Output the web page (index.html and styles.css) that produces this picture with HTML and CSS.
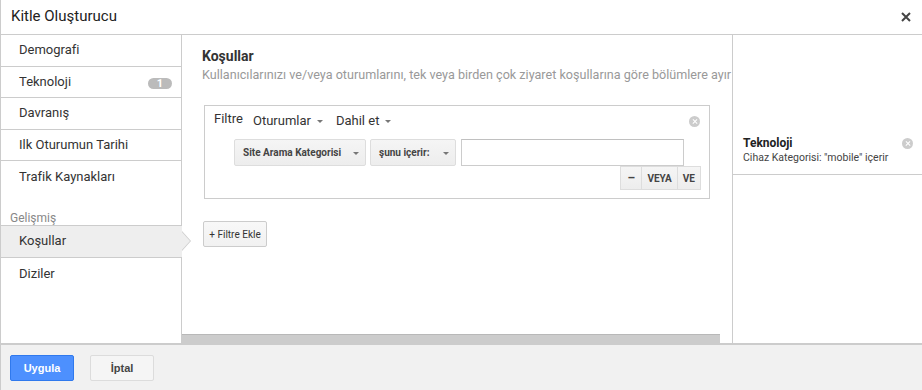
FILE: index.html
```html
<!DOCTYPE html>
<html lang="tr">
<head>
    <meta charset="UTF-8">
    <meta name="viewport" content="width=device-width, initial-scale=1.0">
    <title>Kitle Oluşturucu</title>
    <link rel="stylesheet" href="styles.css">
</head>
<body>
    <div class="dialog">
        <header class="dialog-head">
            <span class="dialog-title">Kitle Oluşturucu</span>
            <svg class="close" width="10" height="10" viewBox="0 0 10 10">
                <path d="M1 1L9 9M9 1L1 9" stroke="#444" stroke-width="2"/>
            </svg>
        </header>

        <div class="dialog-body">
            <nav class="side">
                <div class="side-item">Demografi</div>
                <div class="side-item">Teknoloji <span class="badge">1</span></div>
                <div class="side-item">Davranış</div>
                <div class="side-item">Ilk Oturumun Tarihi</div>
                <div class="side-item no-line">Trafik Kaynakları</div>
                <div class="side-group">Gelişmiş</div>
                <div class="side-item active">Koşullar</div>
                <div class="side-item no-line">Diziler</div>
            </nav>

            <main class="main">
                <div class="main-scroll">
                    <h2 class="main-title">Koşullar</h2>
                    <p class="main-sub">Kullanıcılarınızı ve/veya oturumlarını, tek veya birden çok ziyaret koşullarına göre bölümlere ayır</p>

                    <div class="filter">
                        <div class="filter-head">
                            <span class="filter-label">Filtre</span>
                            <span class="drop">Oturumlar <i class="caret"></i></span>
                            <span class="drop">Dahil et <i class="caret"></i></span>
                            <span class="clear filter-clear"></span>
                        </div>
                        <div class="cond">
                            <button class="sel sel-dim">Site Arama Kategorisi <i class="caret"></i></button>
                            <button class="sel sel-op">şunu içerir: <i class="caret"></i></button>
                            <input class="cond-input" type="text">
                        </div>
                        <div class="ops">
                            <button class="op op-minus">–</button>
                            <button class="op">VEYA</button>
                            <button class="op">VE</button>
                        </div>
                    </div>

                    <button class="add-filter">+ Filtre Ekle</button>
                </div>
                <div class="hscroll"><div class="hscroll-thumb"></div></div>
            </main>

            <aside class="summary">
                <div class="summary-item">
                    <div class="summary-title">Teknoloji</div>
                    <div class="summary-text">Cihaz Kategorisi: "mobile" içerir</div>
                    <span class="clear summary-clear"></span>
                </div>
            </aside>
        </div>

        <footer class="dialog-foot">
            <button class="btn btn-primary">Uygula</button>
            <button class="btn">İptal</button>
        </footer>
    </div>
</body>
</html>
```

FILE: styles.css
```css
* {
    box-sizing: border-box;
}
body {
    margin: 0;
    font-family: Roboto, "Liberation Sans", sans-serif;
    color: #333;
    background: #fff;
}
.dialog {
    width: 922px;
    height: 390px;
    border-left: 1px solid #ccc;
    display: flex;
    flex-direction: column;
    overflow: hidden;
}
.dialog-head {
    height: 35px;
    border-bottom: 1px solid #ccc;
    display: flex;
    align-items: center;
    justify-content: space-between;
    padding: 0 11px 2px 10px;
}
.dialog-title {
    font-size: 15px;
    color: #222;
}
.close {
    margin-top: 1px;
}
.dialog-body {
    height: 308px;
    display: flex;
}

/* left nav */
.side {
    width: 181px;
    flex: none;
    border-right: 1px solid #ccc;
    position: relative;
}
.side-item {
    height: 31.6px;
    border-bottom: 1px solid #ccc;
    font-size: 13px;
    color: #333;
    padding: 7px 0 0 18px;
    display: flex;
    align-items: flex-start;
    justify-content: space-between;
    position: relative;
}
.side-item.no-line {
    border-bottom: none;
    padding-top: 8px;
}
.badge {
    width: 24px;
    height: 11px;
    border-radius: 6px;
    background: #bbb;
    color: #fff;
    font-size: 11px;
    font-weight: bold;
    line-height: 11px;
    text-align: center;
    margin: 4px 9px 0 0;
}
.side-group {
    font-size: 12px;
    color: #888;
    padding: 18px 0 0 9px;
    height: 33px;
    border-bottom: 1px solid #ccc;
}
.side-item.active {
    background: #eee;
    margin-right: -1px;
}
.side-item.active::before,
.side-item.active::after {
    content: "";
    position: absolute;
    top: 5px;
    width: 0;
    height: 0;
    border-top: 10px solid transparent;
    border-bottom: 10px solid transparent;
}
.side-item.active::before {
    right: -9px;
    border-left: 9px solid #ccc;
}
.side-item.active::after {
    right: -8px;
    border-left: 9px solid #eee;
}

/* main */
.main {
    width: 551px;
    flex: none;
    border-right: 1px solid #ccc;
    display: flex;
    flex-direction: column;
}
.main-scroll {
    flex: 1;
    padding: 13px 0 0 20px;
    overflow: hidden;
}
.main-title {
    margin: 0;
    font-size: 14px;
    font-weight: bold;
    color: #333;
    line-height: 17px;
}
.main-sub {
    margin: 1px 0 0;
    font-size: 12.6px;
    color: #999;
    white-space: nowrap;
    line-height: 17px;
}
.filter {
    margin: 22px 0 0 2px;
    width: 506px;
    border: 1px solid #ccc;
    padding: 4px 8px 8px 9px;
}
.filter-head {
    display: flex;
    align-items: center;
    font-size: 13px;
    color: #333;
    height: 20px;
}
.filter-label {
    margin-right: 10px;
    margin-top: -3px;
}
.drop {
    margin-right: 13px;
    display: inline-flex;
    align-items: center;
}
.caret {
    display: inline-block;
    width: 0;
    height: 0;
    border-left: 3.5px solid transparent;
    border-right: 3.5px solid transparent;
    border-top: 3.5px solid #777;
    margin-left: 6px;
    margin-top: 2px;
}
.clear {
    width: 11px;
    height: 11px;
    border-radius: 50%;
    background: #ccc;
    position: relative;
}
.clear::before,
.clear::after {
    content: "";
    position: absolute;
    left: 2.5px;
    top: 5px;
    width: 6px;
    height: 1.2px;
    background: #fff;
    transform: rotate(45deg);
}
.clear::after {
    transform: rotate(-45deg);
}
.filter-clear {
    margin-left: auto;
    margin-right: 1px;
    margin-top: 2px;
}
.cond {
    display: flex;
    gap: 4px;
    margin: 9px 0 0 20px;
}
.sel {
    height: 27px;
    border: 1px solid #ddd;
    border-radius: 2px;
    background: linear-gradient(#f5f5f5, #ededed);
    font-family: Roboto, "Liberation Sans", sans-serif;
    font-size: 10px;
    font-weight: bold;
    color: #444;
    display: flex;
    align-items: center;
    justify-content: space-between;
    padding: 0 6px 0 8px;
}
.sel .caret {
    margin-left: 0;
}
.sel-dim {
    width: 132px;
}
.sel-op {
    width: 86px;
}
.cond-input {
    width: 223px;
    height: 27px;
    margin-left: 1px;
    border: 1px solid #ccc;
    border-top-color: #c0c0c0;
}
.ops {
    display: flex;
    justify-content: flex-end;
}
.op {
    height: 24px;
    border: 1px solid #ddd;
    margin-left: -1px;
    background: linear-gradient(#f5f5f5, #ededed);
    font-family: Roboto, "Liberation Sans", sans-serif;
    font-size: 10px;
    font-weight: bold;
    color: #444;
    padding: 0 5px;
}
.op-minus {
    width: 22px;
    padding: 0;
    font-size: 12px;
}
.add-filter {
    margin: 22px 0 0 1px;
    height: 26px;
    width: 64px;
    border: 1px solid #ccc;
    border-radius: 2px;
    background: linear-gradient(#f8f8f8, #f1f1f1);
    font-family: Roboto, "Liberation Sans", sans-serif;
    font-size: 10px;
    color: #333;
    padding: 0;
}
.hscroll {
    height: 9px;
    padding-right: 12px;
}
.hscroll-thumb {
    height: 9px;
    background: #ccc;
    border-top: 1px solid #b8b8b8;
}

/* right panel */
.summary {
    flex: 1;
    padding-top: 92px;
}
.summary-item {
    position: relative;
    padding: 8px 10px 9px 10px;
    border-bottom: 1px solid #ccc;
}
.summary-title {
    font-size: 12px;
    font-weight: bold;
    color: #222;
    line-height: 16px;
}
.summary-text {
    font-size: 10.5px;
    color: #444;
    line-height: 14px;
}
.summary-clear {
    position: absolute;
    right: 9px;
    top: 11px;
}

/* footer */
.dialog-foot {
    flex: 1;
    background: #f1f1f1;
    border-top: 2px solid #ccc;
    display: flex;
    align-items: flex-start;
    gap: 16px;
    padding: 10px 0 0 9px;
}
.btn {
    width: 64px;
    height: 26px;
    border: 1px solid #dcdcdc;
    border-radius: 2px;
    background: #f5f5f5;
    font-family: "Liberation Sans", Arial, sans-serif;
    font-size: 11px;
    font-weight: bold;
    color: #444;
}
.btn-primary {
    background: #4d90fe;
    border-color: #3079ed;
    color: #fff;
}
```
